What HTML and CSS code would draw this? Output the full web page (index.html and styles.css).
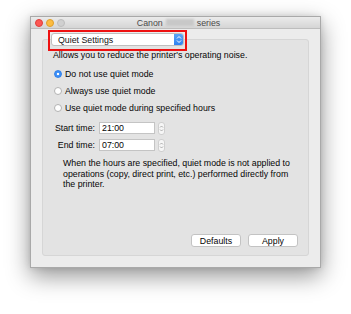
FILE: index.html
```html
<!DOCTYPE html>
<html>
<head>
<meta charset="utf-8">
<link rel="stylesheet" href="styles.css">
</head>
<body>
<div class="window">
  <div class="titlebar">
    <div class="lights">
      <span class="light red"></span>
      <span class="light yellow"></span>
      <span class="light gray"></span>
    </div>
    <div class="title">Canon <span class="blur"></span> series</div>
  </div>
  <div class="content">
    <div class="popup-wrap">
      <div class="popup">
        <span class="popup-label">Quiet Settings</span>
        <span class="popup-arrows">
          <svg width="6" height="9" viewBox="0 0 6 9"><path d="M1 3.5 L3 1.5 L5 3.5 M1 5.5 L3 7.5 L5 5.5" fill="none" stroke="#fff" stroke-width="1"/></svg>
        </span>
      </div>
    </div>
    <div class="group">
      <p class="intro">Allows you to reduce the printer's operating noise.</p>
      <div class="radios">
        <div class="radio-row"><span class="radio on"></span><span>Do not use quiet mode</span></div>
        <div class="radio-row"><span class="radio"></span><span>Always use quiet mode</span></div>
        <div class="radio-row"><span class="radio"></span><span>Use quiet mode during specified hours</span></div>
      </div>
      <div class="times">
        <div class="time-row"><span class="time-label">Start time:</span><span class="field">21:00</span><span class="stepper"><svg width="5" height="9" viewBox="0 0 5 9"><path d="M1 3.5 L2.5 2 L4 3.5 M1 5.5 L2.5 7 L4 5.5" fill="none" stroke="#9a9a9a" stroke-width="0.8"/></svg></span></div>
        <div class="time-row"><span class="time-label">End time:</span><span class="field">07:00</span><span class="stepper"><svg width="5" height="9" viewBox="0 0 5 9"><path d="M1 3.5 L2.5 2 L4 3.5 M1 5.5 L2.5 7 L4 5.5" fill="none" stroke="#9a9a9a" stroke-width="0.8"/></svg></span></div>
      </div>
      <p class="note">When the hours are specified, quiet mode is not applied to operations (copy, direct print, etc.) performed directly from the printer.</p>
      <div class="spacer"></div>
      <div class="buttons">
        <span class="btn">Defaults</span>
        <span class="btn">Apply</span>
      </div>
    </div>
  </div>
</div>
</body>
</html>
```
FILE: styles.css
```css
html, body {
  margin: 0;
  padding: 0;
  background: #fff;
  width: 351px;
  height: 314px;
  overflow: hidden;
}
body {
  font-family: "Liberation Sans", Arial, sans-serif;
  font-size: 8.8px;
  color: #050505;
}
.window {
  margin: 16px 0 0 30px;
  width: 291px;
  height: 252px;
  box-sizing: border-box;
  background: #ececec;
  border: 1px solid #a9a9a9;
  box-shadow: 0 8px 22px rgba(0,0,0,0.42), 0 0 6px rgba(0,0,0,0.12);
  display: flex;
  flex-direction: column;
}
.titlebar {
  height: 12px;
  box-sizing: border-box;
  background: linear-gradient(#ebebeb, #d5d5d5);
  border-bottom: 1px solid #bdbdbd;
  position: relative;
  display: flex;
  align-items: center;
  justify-content: center;
}
.lights {
  position: absolute;
  left: 4px;
  top: 2px;
  display: flex;
  gap: 3px;
}
.light {
  width: 8px;
  height: 8px;
  border-radius: 50%;
  box-sizing: border-box;
}
.light.red { background: #fc5753; border: 0.5px solid #df3d39; }
.light.yellow { background: #fdbc40; border: 0.5px solid #de9f2b; }
.light.gray { background: #d0d0d0; border: 0.5px solid #bdbdbd; }
.title {
  font-size: 8.8px;
  color: #4a4a4a;
  display: flex;
  align-items: center;
  gap: 3px;
  margin-left: 6px;
}
.blur {
  display: inline-block;
  width: 28px;
  height: 7px;
  background: #c8c8c8;
  filter: blur(1px);
}
.content {
  flex: 1;
  display: flex;
  flex-direction: column;
  padding: 0 11px 11px 11px;
  position: relative;
}
.popup-wrap {
  margin: 1px 0 0 6px;
  width: 139px;
  height: 21px;
  box-sizing: border-box;
  border: 2px solid #ee1111;
  padding: 1px;
  position: relative;
  z-index: 2;
}
.popup {
  height: 13px;
  box-sizing: border-box;
  background: #fff;
  border: 1px solid #bfbfbf;
  border-radius: 3px;
  display: flex;
  align-items: center;
  justify-content: space-between;
  padding-left: 6px;
  overflow: hidden;
}
.popup-label { color: #111; }
.popup-arrows {
  width: 10px;
  height: 13px;
  margin-right: -1px;
  background: linear-gradient(#5fa8f7, #2c7ff0);
  display: flex;
  align-items: center;
  justify-content: center;
  border-radius: 0 3px 3px 0;
}
.group {
  flex: 1;
  margin-top: -12px;
  background: #e3e3e3;
  border: 1px solid #d6d6d6;
  border-radius: 3px;
  display: flex;
  flex-direction: column;
  padding: 10px 0 8px 10px;
}
.intro { margin: 0; line-height: 10px; }
.radios {
  margin-top: 8px;
  display: flex;
  flex-direction: column;
  gap: 5px;
}
.radio-row {
  display: flex;
  align-items: center;
  gap: 3px;
  height: 12px;
  margin-left: 1px;
}
.radio {
  width: 8px;
  height: 8px;
  box-sizing: border-box;
  border-radius: 50%;
  background: #fff;
  border: 1px solid #b2b2b2;
}
.radio.on {
  background: radial-gradient(circle, #fff 0 1.3px, #3d8ff7 1.6px);
  border-color: #2f7fe8;
}
.times {
  margin-top: 8px;
  display: flex;
  flex-direction: column;
  gap: 5px;
}
.time-row {
  display: flex;
  align-items: center;
  height: 12px;
}
.time-label {
  width: 42px;
  text-align: right;
  margin-right: 4px;
}
.field {
  width: 56px;
  height: 12px;
  box-sizing: border-box;
  background: #fff;
  border: 1px solid #c4c4c4;
  padding-left: 2px;
  display: flex;
  align-items: center;
}
.stepper {
  margin-left: 3px;
  width: 5px;
  height: 11px;
  border: 1px solid #cfcfcf;
  border-radius: 3px;
  background: #f6f6f6;
  display: flex;
  align-items: center;
  justify-content: center;
}
.note {
  margin: 7px 0 0 10px;
  line-height: 10.5px;
  width: 232px;
}
.spacer { flex: 1; }
.buttons {
  display: flex;
  justify-content: flex-end;
  gap: 7px;
  padding-right: 10px;
}
.btn {
  width: 50px;
  height: 13px;
  box-sizing: border-box;
  background: #fff;
  border: 1px solid #c3c3c3;
  border-radius: 3px;
  display: flex;
  align-items: center;
  justify-content: center;
}
```
